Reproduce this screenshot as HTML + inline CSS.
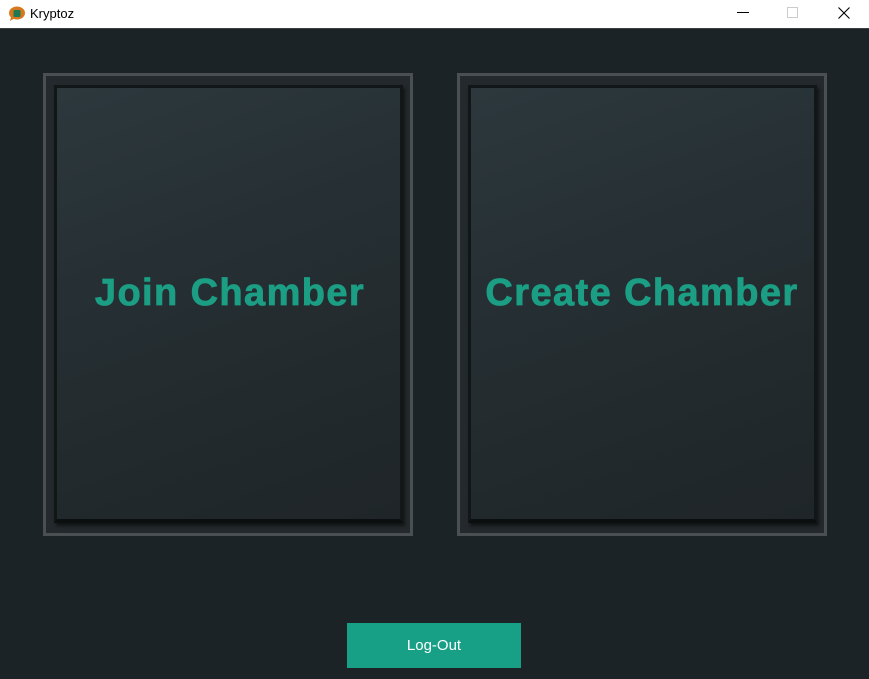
<!DOCTYPE html>
<html><head><meta charset="utf-8"><style>
*{margin:0;padding:0;box-sizing:border-box}
body{width:869px;height:679px;background:#1c2326;position:relative;overflow:hidden;font-family:"Liberation Sans",sans-serif}
.tb{position:absolute;left:0;top:0;width:869px;height:29px;background:#fff;border-bottom:1px solid #3a3f41}
.tb .t{position:absolute;left:30px;top:6px;font-size:13px;color:#000}
.frame{position:absolute;top:73px;width:370px;height:463px;border:3px solid #4a4f52;background:#23292c}
.inner{position:absolute;left:8px;top:9px;width:349px;height:438px;border:3px solid #111617;border-bottom:4px solid #0c0f10;background:linear-gradient(160deg,#2c383d 0%,#252e32 45%,#1f2528 100%);box-shadow:2px 3px 3px rgba(0,0,0,.5)}
.lbl{position:absolute;left:0;right:0;top:196px;text-align:center;color:#1b9e84;font-weight:bold;font-size:38px;letter-spacing:1.4px;-webkit-text-stroke:0.8px #1b9e84}
.btn{position:absolute;left:347px;top:623px;width:174px;height:45px;background:#18a086;color:#fff;font-size:15px;text-align:center;line-height:45px}
</style></head><body>
<div class="tb">
<svg style="position:absolute;left:8px;top:5px" width="18" height="18" viewBox="0 0 18 18"><ellipse cx="9" cy="8" rx="8" ry="6.5" fill="#d7781f"/><path d="M3 12 L2 16 L7 13Z" fill="#d7781f"/><rect x="5.5" y="5" width="7" height="7" rx="1" fill="#1e7a55"/></svg>
<div class="t">Kryptoz</div>
<svg style="position:absolute;left:737px;top:12px" width="12" height="2"><rect width="12" height="1" fill="#000"/></svg>
<svg style="position:absolute;left:787px;top:7px" width="11" height="11"><rect x=".5" y=".5" width="10" height="10" fill="none" stroke="#ccc"/></svg>
<svg style="position:absolute;left:838px;top:7px" width="12" height="12"><path d="M0.5 0.5L11.5 11.5M11.5 0.5L0.5 11.5" stroke="#000" stroke-width="1.1"/></svg>
</div>
<div class="frame" style="left:43px"><div class="inner"></div><div class="lbl" style="left:4px">Join Chamber</div></div>
<div class="frame" style="left:457px"><div class="inner"></div><div class="lbl">Create Chamber</div></div>
<div class="btn">Log-Out</div>
</body></html>
